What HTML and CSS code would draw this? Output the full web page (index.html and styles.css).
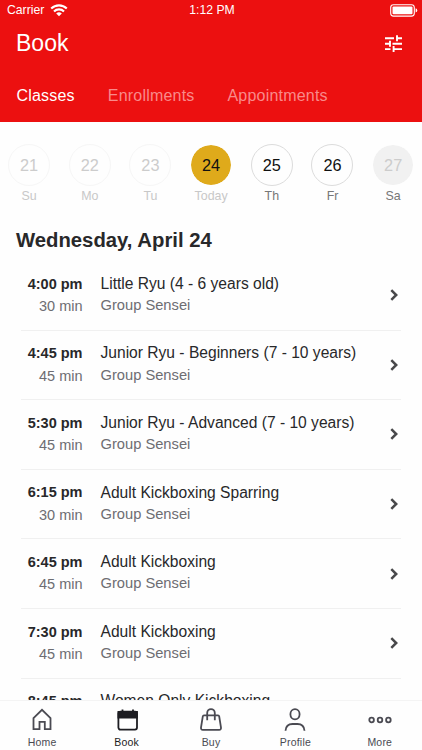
FILE: index.html
```html
<!DOCTYPE html>
<html lang="en">
<head>
    <meta charset="UTF-8">
    <meta name="viewport" content="width=device-width, initial-scale=1.0">
    <title>Book</title>
    <link rel="stylesheet" href="styles.css">
</head>
<body>
    <div class="app">
        <header class="header">
            <div class="status">
                <div class="carrier">
                    <span>Carrier</span>
                    <svg width="18" height="13" viewBox="0 0 18 13" fill="none" stroke="#fff" stroke-width="2.1">
                        <path d="M1.2 4.6a11 11 0 0 1 15.6 0M4 7.5a7 7 0 0 1 10 0"/>
                        <path d="M9 12.2L6.2 9.5a4 4 0 0 1 5.6 0z" fill="#fff" stroke="none"/>
                    </svg>
                </div>
                <div class="clock">1:12 PM</div>
                <svg class="battery" width="28" height="13" viewBox="0 0 28 13">
                    <rect x="0.7" y="0.7" width="23.6" height="11.4" rx="2.8" fill="none" stroke="#fff" stroke-width="1.1"/>
                    <rect x="2.5" y="2.5" width="20" height="7.8" rx="1" fill="#fff"/>
                    <path d="M25.6 4.2q1.7.6 1.7 2.2t-1.7 2.2z" fill="#fff"/>
                </svg>
            </div>
            <div class="title-bar">
                <h1>Book</h1>
                <svg width="17" height="17" viewBox="0 0 17 17" fill="none" stroke="#fff" stroke-width="1.9">
                    <path d="M0 3.2h9M12 3.2h5M12 .2v6M0 8.7h5M5 5.7v6M7.5 8.7H17M0 14.1h5.5M8.6 14.1H17M8.6 11.1v6"/>
                </svg>
            </div>
            <nav class="types">
                <a class="type active">Classes</a>
                <a class="type">Enrollments</a>
                <a class="type">Appointments</a>
            </nav>
        </header>

        <div class="week">
            <div class="day past"><span class="num">21</span><span class="name">Su</span></div>
            <div class="day past"><span class="num">22</span><span class="name">Mo</span></div>
            <div class="day past"><span class="num">23</span><span class="name">Tu</span></div>
            <div class="day today"><span class="num">24</span><span class="name">Today</span></div>
            <div class="day"><span class="num">25</span><span class="name">Th</span></div>
            <div class="day"><span class="num">26</span><span class="name">Fr</span></div>
            <div class="day closed"><span class="num">27</span><span class="name">Sa</span></div>
        </div>

        <main class="schedule">
            <h2>Wednesday, April 24</h2>
            <div class="row">
                <div class="time"><b>4:00 pm</b><span>30 min</span></div>
                <div class="info"><div class="class-name">Little Ryu (4 - 6 years old)</div><div class="teacher">Group Sensei</div></div>
                <svg class="chevron" viewBox="0 0 8 12"><path d="M1.3 1.2L6.2 6l-4.9 4.8"/></svg>
            </div>
            <div class="row">
                <div class="time"><b>4:45 pm</b><span>45 min</span></div>
                <div class="info"><div class="class-name">Junior Ryu - Beginners (7 - 10 years)</div><div class="teacher">Group Sensei</div></div>
                <svg class="chevron" viewBox="0 0 8 12"><path d="M1.3 1.2L6.2 6l-4.9 4.8"/></svg>
            </div>
            <div class="row">
                <div class="time"><b>5:30 pm</b><span>45 min</span></div>
                <div class="info"><div class="class-name">Junior Ryu - Advanced (7 - 10 years)</div><div class="teacher">Group Sensei</div></div>
                <svg class="chevron" viewBox="0 0 8 12"><path d="M1.3 1.2L6.2 6l-4.9 4.8"/></svg>
            </div>
            <div class="row">
                <div class="time"><b>6:15 pm</b><span>30 min</span></div>
                <div class="info"><div class="class-name">Adult Kickboxing Sparring</div><div class="teacher">Group Sensei</div></div>
                <svg class="chevron" viewBox="0 0 8 12"><path d="M1.3 1.2L6.2 6l-4.9 4.8"/></svg>
            </div>
            <div class="row">
                <div class="time"><b>6:45 pm</b><span>45 min</span></div>
                <div class="info"><div class="class-name">Adult Kickboxing</div><div class="teacher">Group Sensei</div></div>
                <svg class="chevron" viewBox="0 0 8 12"><path d="M1.3 1.2L6.2 6l-4.9 4.8"/></svg>
            </div>
            <div class="row">
                <div class="time"><b>7:30 pm</b><span>45 min</span></div>
                <div class="info"><div class="class-name">Adult Kickboxing</div><div class="teacher">Group Sensei</div></div>
                <svg class="chevron" viewBox="0 0 8 12"><path d="M1.3 1.2L6.2 6l-4.9 4.8"/></svg>
            </div>
            <div class="row">
                <div class="time"><b>8:45 pm</b></div>
                <div class="info"><div class="class-name">Women Only Kickboxing</div></div>
            </div>
        </main>

        <nav class="tabs">
            <a class="tab">
                <svg viewBox="0 0 24 24"><path d="M3.5 10.2L12 1.8l8.5 8.4v10.9h-5.7v-7.2H9.5v7.2h-6z"/></svg>
                <span>Home</span>
            </a>
            <a class="tab selected">
                <svg viewBox="0 0 24 24"><rect x="3.4" y="3.6" width="18.6" height="18" rx="2"/><path d="M3.4 4H22v5.6H3.4z" fill="currentColor"/><path d="M7.5 1.6v3M18 1.6v3"/></svg>
                <span>Book</span>
            </a>
            <a class="tab">
                <svg viewBox="0 0 24 24"><path d="M5 7.4h14q1 0 1.2 1L22 19.5q.2 2.3-1.8 2.3H3.8Q1.8 21.8 2 19.5L3.8 8.4Q4 7.4 5 7.4z"/><path d="M8.2 12.2V5a3.8 3.9 0 0 1 7.6 0v7.2"/></svg>
                <span>Buy</span>
            </a>
            <a class="tab">
                <svg viewBox="0 0 24 24"><ellipse cx="12" cy="6.3" rx="4.6" ry="5.1"/><path d="M2.5 22.8q.5-6.8 7-6.8h5q6.500 0 7 6.800"/></svg>
                <span>Profile</span>
            </a>
            <a class="tab">
                <svg viewBox="0 0 24 24"><circle cx="3.6" cy="12" r="2.3"/><circle cx="12" cy="12" r="2.3"/><circle cx="20.4" cy="12" r="2.3"/></svg>
                <span>More</span>
            </a>
        </nav>
    </div>
</body>
</html>
```

FILE: styles.css
```css
* {
    box-sizing: border-box;
}
body {
    margin: 0;
    font-family: "Liberation Sans", Arial, sans-serif;
    color: #28282a;
    background-color: #fefefe;
}
.app {
    display: flex;
    flex-direction: column;
    height: 750px;
    overflow: hidden;
}
.header {
    flex: none;
    height: 122px;
    color: #fff;
    background-color: #ec1010;
}
.status {
    display: grid;
    grid-template-columns: 1fr auto 1fr;
    align-items: center;
    height: 20px;
    padding: 0 4px 0 7px;
    font-size: 12.2px;
}
.carrier {
    display: flex;
    align-items: center;
    gap: 6px;
}
.clock {
    padding-right: 1px;
}
.battery {
    justify-self: end;
}
.title-bar {
    display: flex;
    justify-content: space-between;
    align-items: center;
    height: 46px;
    padding: 0 20px 0 16px;
}
h1 {
    margin: 0;
    font-size: 23px;
    font-weight: normal;
}
.types {
    display: flex;
    gap: 33px;
    padding: 20px 16.5px 0;
    font-size: 16px;
    letter-spacing: 0.2px;
    line-height: 20px;
}
.type {
    color: #f98a8a;
}
.type.active {
    color: #fff;
}
.week {
    display: grid;
    grid-template-columns: repeat(7, 60.7px);
    flex: none;
    height: 107px;
    margin-left: -1.3px;
    padding-top: 22px;
}
.day {
    display: flex;
    flex-direction: column;
    align-items: center;
}
.num {
    width: 42px;
    height: 42px;
    border: 1px solid #dcdcdc;
    border-radius: 50%;
    font-size: 16.3px;
    line-height: 40px;
    text-align: center;
    color: #111;
}
.name {
    margin-top: 3px;
    font-size: 12.4px;
    line-height: 15px;
    color: #777;
}
.past .num {
    border-color: #f6f6f6;
    color: #ccc;
}
.past .name, .today .name {
    color: #c8c8c8;
}
.today .num {
    border-color: #fefefe;
    background-color: #dfaa1b;
    background-clip: padding-box;
}
.closed .num {
    border-color: #fefefe;
    background-color: #f1f1f1;
    background-clip: padding-box;
    color: #ccc;
}
.schedule {
    flex: 1;
    min-height: 0;
    overflow: hidden;
}
h2 {
    margin: 0;
    padding-left: 16px;
    font-size: 20.3px;
    line-height: 22px;
}
.row {
    display: flex;
    height: 69.6px;
    margin: 0 21px;
    border-bottom: 1px solid #f0f0f0;
}
h2 + .row {
    margin-top: 10px;
}
.time {
    display: flex;
    flex-direction: column;
    width: 61.5px;
    padding-top: 12.6px;
    font-size: 14.5px;
    line-height: 20px;
    text-align: right;
}
.time span {
    margin-top: 2.5px;
    color: #6d6d72;
}
.info {
    flex: 1;
    padding: 12.8px 0 0 18px;
    white-space: nowrap;
}
.class-name {
    font-size: 15.6px;
    line-height: 20px;
}
.teacher {
    margin-top: 1.2px;
    font-size: 14.7px;
    line-height: 20px;
    color: #6d6d72;
}
.chevron {
    align-self: center;
    width: 8px;
    height: 12px;
    margin-right: 3px;
    fill: none;
    stroke: #48484a;
    stroke-width: 2.5;
}
.tabs {
    display: grid;
    grid-template-columns: repeat(5, 1fr);
    flex: none;
    height: 50px;
    border-top: 1px solid #f4f4f4;
    background-color: #fefefe;
}
.tab {
    display: flex;
    flex-direction: column;
    align-items: center;
    padding-top: 7px;
    font-size: 10.5px;
    letter-spacing: 0.2px;
    color: #4a4a52;
}
.tab svg {
    width: 24px;
    height: 24px;
    fill: none;
    stroke: currentColor;
    stroke-width: 1.8;
}
.tab span {
    margin-top: 4px;
    line-height: 13px;
}
.tab.selected {
    color: #1d1d22;
}
```
